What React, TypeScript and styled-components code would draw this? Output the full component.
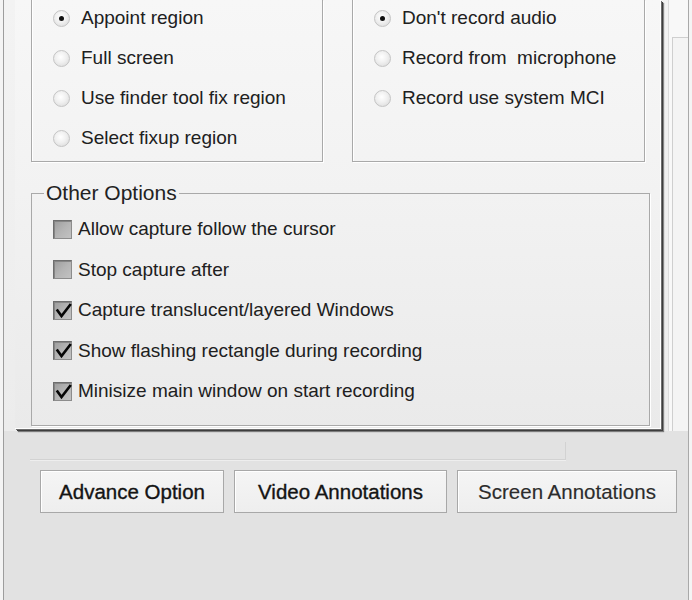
import * as React from 'react';
import styled, { createGlobalStyle } from 'styled-components';

const GlobalStyle = createGlobalStyle`
  html, body {
    margin: 0;
    padding: 0;
  }
  body {
    background: #f6f6f6;
    font-family: "Liberation Sans", Arial, sans-serif;
    overflow: hidden;
  }
`;

const Window = styled.div`
  width: 692px;
  height: 600px;
  box-sizing: border-box;
  padding: 0 3px;
  background: #f4f4f4;
`;

const Frame = styled.div`
  height: 100%;
  display: flex;
  flex-direction: column;
  border-left: 1px solid #9d9d9d;
  border-right: 1px solid #a9a9a9;
  background: #e2e2e2;
`;

const TopZone = styled.div`
  display: flex;
  height: 431px;
  flex-shrink: 0;
  padding-left: 11px;
  background: linear-gradient(180deg, #f3f3f3 0%, #ececec 100%);
`;

const Panel = styled.div`
  width: 646px;
  height: 429px;
  flex-shrink: 0;
  box-sizing: border-box;
  padding: 0 11px 4px 16px;
  display: flex;
  flex-direction: column;
  background: linear-gradient(180deg, #f7f7f7 0%, #f2f2f2 45%, #eaeaea 100%);
  box-shadow: inset -1px -1px 0 #ffffff, 1px 1px 0 #6e6e6e, 2px 2px 0 #3e3e3e,
    3px 3px 1px rgba(0, 0, 0, 0.45);
`;

const Gutter = styled.div`
  flex: 1;
  display: flex;
  margin-left: 7px;
  padding: 37px 0 0 3px;
  border-left: 1px solid #dcdcdc;
  background: #f8f8f8;
`;

const Rail = styled.div`
  flex: 1;
  border-left: 1px solid #cfcfcf;
  border-top: 1px solid #cfcfcf;
  background: #f4f4f4;
`;

const TopRow = styled.div`
  display: grid;
  grid-template-columns: 292px 293px;
  column-gap: 29px;
`;

const GroupBox = styled.div`
  box-sizing: border-box;
  border: 1px solid #a9a9a9;
  border-top: none;
  padding: 0 0 3px 21px;
  box-shadow: inset 1px 0 0 #ffffff, 1px 1px 0 #ffffff;
`;

const OptionList = styled.div`
  display: flex;
  flex-direction: column;
  margin-top: -2px;
`;

const RadioRow = styled.div`
  height: 40px;
  display: flex;
  align-items: center;
  font-size: 19px;
  color: #202020;
  white-space: pre;
`;

const RadioDot = styled.span<{ $on?: boolean }>`
  width: 17px;
  height: 17px;
  flex-shrink: 0;
  margin-right: 11px;
  box-sizing: border-box;
  border-radius: 50%;
  border: 1px solid #c4c4c4;
  background: radial-gradient(circle at 45% 40%, #ffffff 0%, #f0f0f0 45%, #d6d6d6 100%);
  display: flex;
  align-items: center;
  justify-content: center;
  &::after {
    content: '';
    width: 5px;
    height: 5px;
    border-radius: 50%;
    background: #111111;
    display: ${({ $on }) => ($on ? 'block' : 'none')};
  }
`;

const OtherBox = styled.fieldset`
  margin: 20px 0 0;
  padding: 0 12px 13px;
  min-width: 0;
  border: 1px solid #a9a9a9;
  box-shadow: 1px 1px 0 #ffffff;
`;

const Legend = styled.legend`
  font-size: 21px;
  line-height: 22px;
  padding: 0 2px;
  color: #222222;
`;

const CheckList = styled.div`
  display: flex;
  flex-direction: column;
  margin-top: 5px;
  padding-left: 9px;
`;

const CheckRow = styled.div`
  height: 40.5px;
  display: flex;
  align-items: center;
  font-size: 19px;
  color: #202020;
`;

const CheckBox = styled.span`
  position: relative;
  width: 19px;
  height: 19px;
  flex-shrink: 0;
  margin-right: 6px;
  box-sizing: border-box;
  border: 1px solid #6e6e6e;
  border-right-color: #8c8c8c;
  border-bottom-color: #8c8c8c;
  background: linear-gradient(135deg, #9c9c9c 0%, #b4b4b4 50%, #c2c2c2 100%);
  box-shadow: inset 1px 1px 0 #858585;
  svg {
    position: absolute;
    left: -1px;
    top: -2px;
  }
`;

const BottomZone = styled.div`
  flex: 1;
  display: flex;
  flex-direction: column;
  padding-left: 26px;
`;

const Ledge = styled.div`
  width: 536px;
  height: 18px;
  margin-top: 11px;
  box-sizing: border-box;
  border-right: 1px solid #d2d2d2;
  border-bottom: 1px solid #d2d2d2;
  box-shadow: 0 1px 0 #eeeeee;
`;

const ButtonRow = styled.div`
  display: flex;
  gap: 10px;
  margin-top: 10px;
  padding-left: 10px;
`;

const Button = styled.button<{ $w: number; $dim?: boolean }>`
  width: ${({ $w }) => $w}px;
  height: 43px;
  padding: 0;
  box-sizing: border-box;
  border: 1px solid #a8a8a8;
  border-radius: 0;
  background: linear-gradient(180deg, #f5f5f5 0%, #eeeeee 100%);
  box-shadow: inset 1px 1px 0 #ffffff;
  font-family: "Liberation Sans", Arial, sans-serif;
  font-size: 20.5px;
  color: ${({ $dim }) => ($dim ? '#2c2c2c' : '#141414')};
  -webkit-text-stroke: ${({ $dim }) => ($dim ? '0.15px #2c2c2c' : '0.35px #141414')};
`;

const regionOptions = [
  { label: 'Appoint region', on: true },
  { label: 'Full screen' },
  { label: 'Use finder tool fix region' },
  { label: 'Select fixup region' },
];

const audioOptions = [
  { label: "Don't record audio", on: true },
  { label: 'Record from  microphone' },
  { label: 'Record use system MCI' },
];

const otherOptions = [
  { label: 'Allow capture follow the cursor' },
  { label: 'Stop capture after' },
  { label: 'Capture translucent/layered Windows', on: true },
  { label: 'Show flashing rectangle during recording', on: true },
  { label: 'Minisize main window on start recording', on: true },
];

const Tick: React.FC = () => (
  <svg width="21" height="21" viewBox="0 0 21 21">
    <path d="M4.5 10.5 L8.5 16 L17 5" fill="none" stroke="#050505" strokeWidth="2.6" strokeLinecap="square" />
  </svg>
);

const RadioGroup: React.FC<{ items: { label: string; on?: boolean }[] }> = ({ items }) => (
  <GroupBox>
    <OptionList>
      {items.map((it) => (
        <RadioRow key={it.label}>
          <RadioDot $on={it.on} />
          {it.label}
        </RadioRow>
      ))}
    </OptionList>
  </GroupBox>
);

export default function App() {
  return (
    <>
      <GlobalStyle />
      <Window>
        <Frame>
          <TopZone>
            <Panel>
              <TopRow>
                <RadioGroup items={regionOptions} />
                <RadioGroup items={audioOptions} />
              </TopRow>
              <OtherBox>
                <Legend>Other Options</Legend>
                <CheckList>
                  {otherOptions.map((it) => (
                    <CheckRow key={it.label}>
                      <CheckBox>{it.on && <Tick />}</CheckBox>
                      {it.label}
                    </CheckRow>
                  ))}
                </CheckList>
              </OtherBox>
            </Panel>
            <Gutter>
              <Rail />
            </Gutter>
          </TopZone>
          <BottomZone>
            <Ledge />
            <ButtonRow>
              <Button $w={184}>Advance Option</Button>
              <Button $w={213}>Video Annotations</Button>
              <Button $w={220} $dim>Screen Annotations</Button>
            </ButtonRow>
          </BottomZone>
        </Frame>
      </Window>
    </>
  );
}
